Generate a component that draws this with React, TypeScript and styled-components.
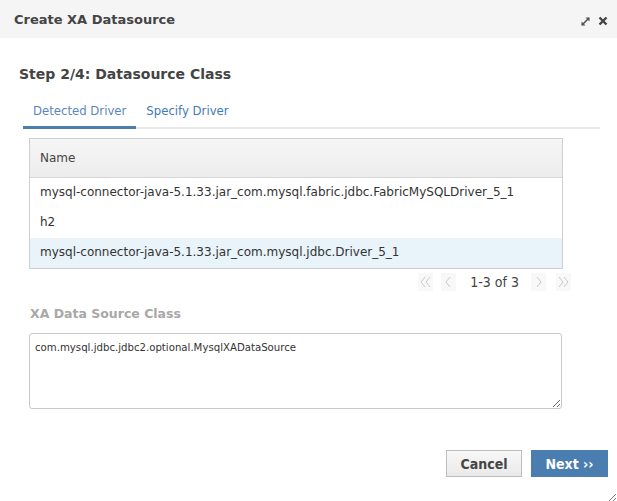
import React from "react";
import styled, { createGlobalStyle } from "styled-components";

const Global = createGlobalStyle`
  html, body { margin: 0; padding: 0; background: #fff; }
  body { font-family: "DejaVu Sans", sans-serif; color: #333; }
`;

const Dialog = styled.div`
  width: 617px;
  height: 501px;
  display: flex;
  flex-direction: column;
  position: relative;
  background: #fff;
  overflow: hidden;
`;

const Header = styled.div`
  height: 38px;
  background: #f5f5f5;
  display: flex;
  align-items: center;
  padding: 0 9px 0 14px;
  box-sizing: border-box;
`;

const Title = styled.div`
  flex: 1;
  font-weight: bold;
  font-size: 13px;
  color: #444;
`;

const HeaderIcons = styled.div`
  display: flex;
  align-items: center;
  gap: 7px;
  margin-top: 4px;
`;

const Body = styled.div`
  flex: 1;
  padding: 26px 17px 0 19px;
  display: flex;
  flex-direction: column;
`;

const StepTitle = styled.div`
  font-weight: bold;
  font-size: 14px;
  color: #444;
  height: 20px;
  line-height: 20px;
`;

const Tabs = styled.div`
  margin: 12px 0 0 4px;
  display: flex;
  border-bottom: 2px solid #e8e8e8;
  height: 31px;
`;

const Tab = styled.div<{ $active?: boolean }>`
  padding: 0 10px;
  font-family: "DejaVu Sans Condensed", "DejaVu Sans", sans-serif;
  font-stretch: condensed;
  font-size: 13px;
  line-height: 30px;
  color: ${(p) => (p.$active ? "#5a87bb" : "#3f7ab8")};
  border-bottom: 3px solid ${(p) => (p.$active ? "#4a7eb0" : "transparent")};
  margin-bottom: -2px;
  box-sizing: border-box;
`;

const Table = styled.div`
  margin: 9px 0 0 10px;
  width: 534px;
  border: 1px solid #cfcfcf;
  box-sizing: border-box;
`;

const HeadRow = styled.div`
  height: 38px;
  display: flex;
  align-items: center;
  padding-left: 10px;
  background: linear-gradient(#f6f6f6, #ececec);
  border-bottom: 1px solid #d6d6d6;
  font-size: 12px;
  color: #444;
`;

const Row = styled.div<{ $selected?: boolean }>`
  height: 30px;
  display: flex;
  align-items: center;
  padding: 0 0 2px 10px;
  box-sizing: border-box;
  font-size: 12px;
  color: #333;
  background: ${(p) => (p.$selected ? "#e8f3fa" : "#fff")};
`;

const Pager = styled.div`
  width: 552px;
  display: flex;
  justify-content: flex-end;
  align-items: center;
  height: 26px;
`;

const PageBtn = styled.div<{ $gap?: number }>`
  width: 15px;
  height: 18px;
  margin-left: ${(p) => p.$gap ?? 0}px;
  background: #f8f8f8;
  display: flex;
  align-items: center;
  justify-content: center;
`;

const PageInfo = styled.div`
  font-family: "DejaVu Sans Condensed", "DejaVu Sans", sans-serif;
  font-stretch: condensed;
  font-size: 14px;
  color: #444;
  margin: 0 12px 0 14px;
`;

const FieldLabel = styled.div`
  margin: 11px 0 0 11px;
  font-weight: bold;
  font-size: 12.5px;
  color: #a8a8a8;
`;

const TextArea = styled.textarea`
  margin: 12px 0 0 10px;
  width: 533px;
  height: 76px;
  box-sizing: border-box;
  border: 1px solid #c8c8c8;
  border-radius: 3px;
  padding: 7px 5px 4px;
  font-family: "DejaVu Sans Condensed", "DejaVu Sans", sans-serif;
  font-stretch: condensed;
  font-size: 11.3px;
  color: #333;
  resize: vertical;
  outline: none;
`;

const Footer = styled.div`
  display: flex;
  justify-content: flex-end;
  gap: 9px;
  padding: 0 9px 24px 0;
`;

const Button = styled.button<{ $primary?: boolean }>`
  height: 27px;
  padding: 0 13.5px;
  font-family: "DejaVu Sans Condensed", "DejaVu Sans", sans-serif;
  font-stretch: condensed;
  font-weight: bold;
  font-size: 14px;
  border: 1px solid ${(p) => (p.$primary ? "#4a7eb0" : "#bdbdbd")};
  background: ${(p) => (p.$primary ? "#4a7eb0" : "linear-gradient(#f8f8f8, #e9e9e9)")};
  color: ${(p) => (p.$primary ? "#fff" : "#444")};
  cursor: pointer;
`;

const Grip = styled.div`
  position: absolute;
  right: 1px;
  bottom: 1px;
  width: 11px;
  height: 11px;
`;

const ExpandIcon = () => (
  <svg width="11" height="11" viewBox="0 0 11 11">
    <path d="M2 9 L9 2" stroke="#555" strokeWidth="1.6" />
    <path d="M5.5 1.5 H9.5 V5.5 Z" fill="#555" />
    <path d="M1.5 5.5 V9.5 H5.5 Z" fill="#555" />
  </svg>
);

const CloseIcon = () => (
  <svg width="10" height="10" viewBox="0 0 10 10">
    <path d="M1.5 1.5 L8.5 8.5 M8.5 1.5 L1.5 8.5" stroke="#444" strokeWidth="2.4" />
  </svg>
);

const Chevron = ({ dir, double }: { dir: "l" | "r"; double?: boolean }) => {
  const one = (x: number) =>
    dir === "l" ? `M${x + 4} 2 L${x} 7 L${x + 4} 12` : `M${x} 2 L${x + 4} 7 L${x} 12`;
  return (
    <svg width="13" height="14" viewBox="0 0 13 14">
      <path
        d={double ? `${one(2)} ${one(7)}` : one(dir === "l" ? 4 : 5)}
        stroke="#c9c9c9"
        strokeWidth="1"
        fill="none"
      />
    </svg>
  );
};

const rows = [
  "mysql-connector-java-5.1.33.jar_com.mysql.fabric.jdbc.FabricMySQLDriver_5_1",
  "h2",
  "mysql-connector-java-5.1.33.jar_com.mysql.jdbc.Driver_5_1",
];

export default function App() {
  return (
    <>
      <Global />
      <Dialog>
        <Header>
          <Title>Create XA Datasource</Title>
          <HeaderIcons>
            <ExpandIcon />
            <CloseIcon />
          </HeaderIcons>
        </Header>
        <Body>
          <StepTitle>Step 2/4: Datasource Class</StepTitle>
          <Tabs>
            <Tab $active>Detected Driver</Tab>
            <Tab>Specify Driver</Tab>
          </Tabs>
          <Table>
            <HeadRow>Name</HeadRow>
            {rows.map((r, i) => (
              <Row key={i} $selected={i === 2}>
                {r}
              </Row>
            ))}
          </Table>
          <Pager>
            <PageBtn>
              <Chevron dir="l" double />
            </PageBtn>
            <PageBtn $gap={8}>
              <Chevron dir="l" />
            </PageBtn>
            <PageInfo>1-3 of 3</PageInfo>
            <PageBtn>
              <Chevron dir="r" />
            </PageBtn>
            <PageBtn $gap={10}>
              <Chevron dir="r" double />
            </PageBtn>
          </Pager>
          <FieldLabel>XA Data Source Class</FieldLabel>
          <TextArea defaultValue="com.mysql.jdbc.jdbc2.optional.MysqlXADataSource" />
        </Body>
        <Footer>
          <Button>Cancel</Button>
          <Button $primary>Next ››</Button>
        </Footer>
        <Grip>
          <svg width="11" height="11" viewBox="0 0 11 11">
            <path d="M1 11 L11 1 M5 11 L11 5 M9 11 L11 9" stroke="#777" strokeWidth="1" />
          </svg>
        </Grip>
      </Dialog>
    </>
  );
}
